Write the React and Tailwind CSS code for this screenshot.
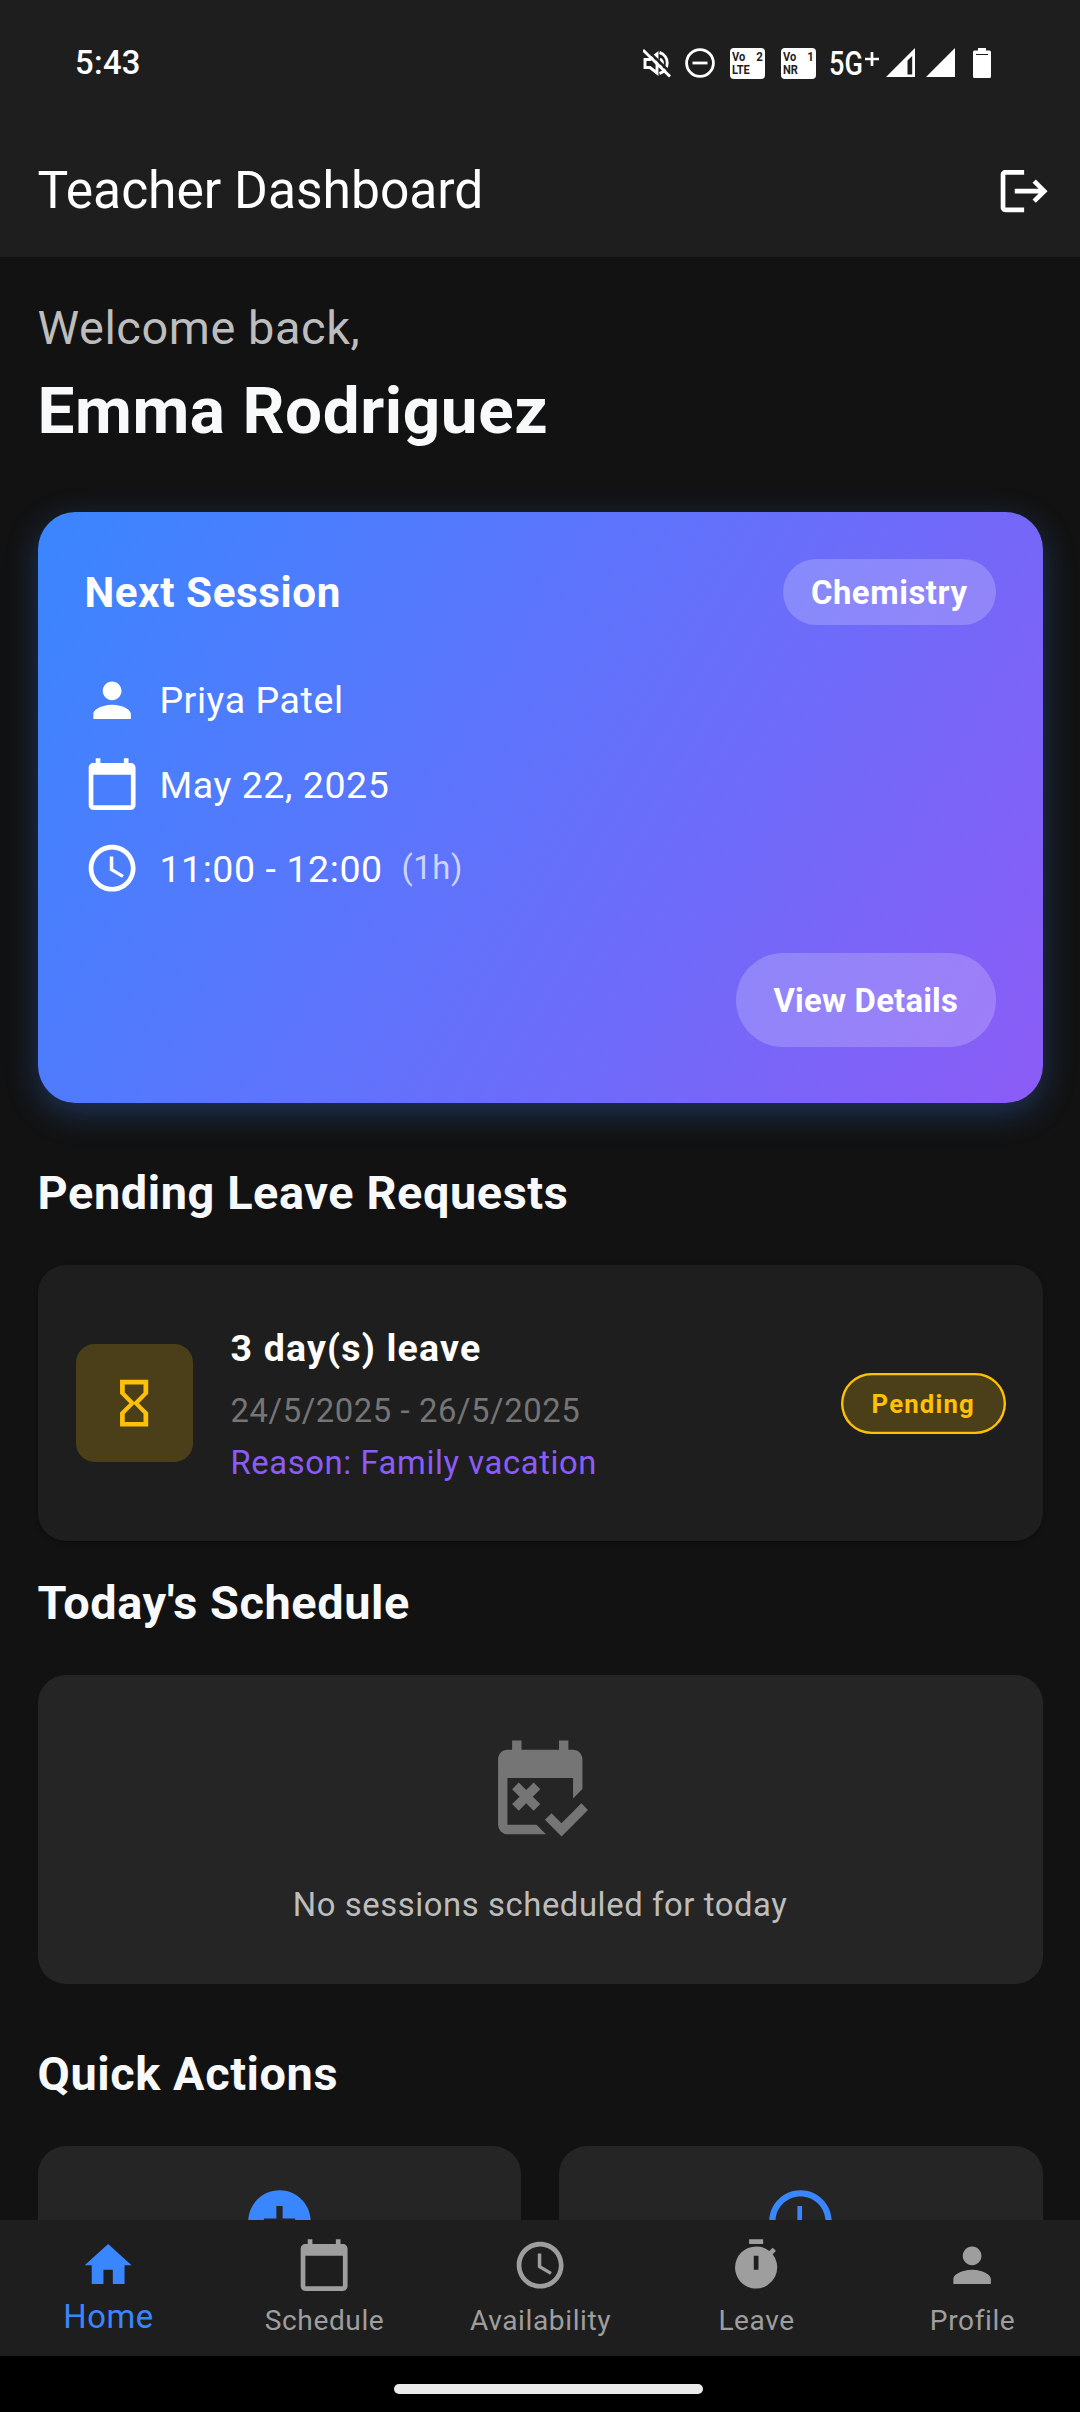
import {
  MdLogout, MdPerson, MdCalendarToday, MdSchedule, MdHourglassEmpty,
  MdFreeCancellation, MdAddCircle, MdHome, MdTimer,
} from "react-icons/md";

function MutedIcon() {
  return (
    <svg viewBox="0 0 28 30" className="h-[30px] w-[28px]" fill="none" stroke="white" strokeWidth="2.9">
      <path d="M2 11.500h5l7-5.500v19l-7-5.500H2z" />
      <path d="M17 11a4.500 4.500 0 0 1 0 8" />
      <path d="M16.500 4.500a11 11 0 0 1 0 21" />
      <path d="M1 -1l27 26" stroke="#1e1e1e" strokeWidth="2.500" />
      <path d="M0 2l27 26.500" strokeWidth="2.900" />
    </svg>
  );
}

function DndIcon() {
  return (
    <svg viewBox="0 0 30 30" className="h-[30px] w-[30px]" fill="none" stroke="white" strokeWidth="2.8">
      <circle cx="15" cy="15" r="13.4" />
      <path d="M7.500 15h15" />
    </svg>
  );
}

function VoBadge({ kind, slot }) {
  return (
    <div className="flex h-[31px] w-[35px] flex-col rounded-[4px] bg-white px-[2.3px] pt-[2px] text-[13.5px] leading-[13px] font-bold tracking-normal text-[#1e1e1e]">
      <div className="flex justify-between">
        <span className="origin-left scale-x-[0.82]">Vo</span>
        <span className="origin-right scale-x-[0.85]">{slot}</span>
      </div>
      <div className="origin-left scale-x-[0.82]">{kind}</div>
    </div>
  );
}

function StatusBar() {
  return (
    <div className="flex h-[126px] items-start pl-[75px] text-white">
      <span className="mt-[43px] text-[32.8px] leading-[40px] font-medium tracking-[0.3px]">5:43</span>
      <div className="ml-auto flex w-[437px] items-start pt-[48px]">
        <MutedIcon />
        <div className="ml-[14px]"><DndIcon /></div>
        <div className="ml-[15px]"><VoBadge kind="LTE" slot="2" /></div>
        <div className="ml-[16px]"><VoBadge kind="NR" slot="1" /></div>
        <div className="ml-[13px] flex w-[57px] items-start">
          <span className="-mt-[4px] w-[36px] origin-left scale-x-[0.82] text-[33px] leading-[40px] font-medium tracking-normal">5G</span>
          <svg viewBox="0 0 14 14" className="mt-[4px] h-[14px] w-[14px] shrink-0" stroke="white" strokeWidth="2.7">
            <path d="M7 0v14M0 7h14" />
          </svg>
        </div>
        <svg viewBox="0 0 29 29" className="h-[29px] w-[29px]">
          <path fillRule="evenodd" fill="white" d="M29 0v29H0zM26.200 8v18.500H21.500V12.500z" />
        </svg>
        <svg viewBox="0 0 29 29" className="ml-[11px] h-[29px] w-[29px]">
          <path fill="white" d="M29 0v29H0z" />
        </svg>
        <svg viewBox="0 0 18 30" className="ml-[18px] h-[30px] w-[18px]">
          <path fillRule="evenodd" fill="white" d="M5 0h8v2.500h3.500q1.500 0 1.500 1.500v24.500q0 1.500-1.500 1.500h-15q-1.500 0-1.500-1.500V4q0-1.500 1.500-1.500H5zM3 6h12v1H3z" />
        </svg>
      </div>
    </div>
  );
}

function SessionRow({ icon: Icon, children }) {
  return (
    <div className="flex h-[56.25px] items-center gap-[18.75px] text-[37.5px]">
      <Icon size={56.25} />
      <div className="flex items-center gap-[18.75px] pt-[1px]">{children}</div>
    </div>
  );
}

function NextSession() {
  return (
    <section className="mt-[57.3px] flex h-[590.6px] flex-col rounded-[37.5px] bg-[linear-gradient(120.45deg,#3a86ff,#8b5cf6)] p-[46.875px] text-white shadow-[0_9.4px_33px_rgba(58,134,255,0.3)]">
      <div className="flex h-[65.6px] items-center justify-between">
        <h2 className="pt-[1px] text-[42.19px] font-bold">Next Session</h2>
        <span className="flex h-[65.6px] items-center rounded-full bg-white/20 px-[28.1px] pt-[3px] text-[32.81px] font-bold">Chemistry</span>
      </div>
      <div className="mt-[46.875px] flex flex-col gap-[28.125px]">
        <SessionRow icon={MdPerson}>Priya Patel</SessionRow>
        <SessionRow icon={MdCalendarToday}>May 22, 2025</SessionRow>
        <SessionRow icon={MdSchedule}>
          11:00 - 12:00
          <span className="text-[32.81px] text-white/70">(1h)</span>
        </SessionRow>
      </div>
      <button className="mt-[56.25px] h-[93.75px] shrink-0 self-end rounded-full bg-white/20 px-[37.5px] pt-[3px] text-[32.81px] font-bold tracking-[0.234px]">
        View Details
      </button>
    </section>
  );
}

function SectionTitle({ className, children }) {
  return <h2 className={`text-[46.875px] leading-[66px] font-bold text-[#f8f9fa] ${className}`}>{children}</h2>;
}

function LeaveRequest() {
  return (
    <section className="mt-[39px] flex h-[276.2px] items-center rounded-[28.1px] bg-[#1e1e1e] pr-[37px] pl-[38px] shadow-[0_2px_4px_rgba(0,0,0,0.3)]">
      <div className="flex size-[117.2px] shrink-0 items-center justify-center rounded-[18.75px] bg-[#ffc107]/20 text-[#ffc107]">
        <MdHourglassEmpty size={56.25} />
      </div>
      <div className="ml-[37.8px] flex flex-1 flex-col pt-[3px]">
        <h3 className="text-[37.5px] leading-[56px] font-bold tracking-[1.17px] text-white">3 day(s) leave</h3>
        <p className="mt-[9px] text-[32.81px] leading-[52px] text-[#757575]">24/5/2025 - 26/5/2025</p>
        <p className="text-[32.81px] leading-[52px] text-[#8b5cf6]">Reason: Family vacation</p>
      </div>
      <span className="mt-[1px] flex h-[61px] items-center rounded-full bg-[#ffc107]/20 px-[30.500px] pt-[1px] text-[25.78px] font-bold tracking-[1.17px] text-[#ffc107] shadow-[inset_0_0_0_2.34px_#ffc107]">
        Pending
      </span>
    </section>
  );
}

function ActionCard({ icon: Icon }) {
  return (
    <button className="flex h-[260px] flex-col items-center rounded-[28.1px] bg-[#252525] pt-[38px] text-[#3a86ff]">
      <Icon size={75} />
    </button>
  );
}

function NavItem({ icon: Icon, label, active }) {
  return (
    <div className={`flex flex-col items-center pt-[16.7px] ${active ? "text-[#3a86ff]" : "text-[#9e9e9e]"}`}>
      <Icon size={56.25} />
      <span className={active ? "mt-[5.5px] pl-[1px] text-[32.81px] leading-[38px]" : "mt-[9px] pl-[1.2px] text-[28.125px] leading-[38px]"}>{label}</span>
    </div>
  );
}

export default function App() {
  return (
    <div className="flex h-[2412px] w-[1080px] flex-col overflow-hidden bg-[#121212] font-['Roboto',sans-serif] tracking-[0.586px]">
      <header className="h-[257px] shrink-0 bg-[#1e1e1e]">
        <StatusBar />
        <div className="flex h-[131px] items-center justify-between pr-[28px] pl-[37.5px] text-white">
          <h1 className="pb-[2px] text-[51.56px] leading-[60px] tracking-normal">Teacher Dashboard</h1>
          <MdLogout size={56.25} />
        </div>
      </header>

      <main className="h-[1963px] shrink-0 overflow-hidden px-[37.5px]">
        <p className="mt-[38px] text-[46.875px] leading-[66px] text-[#bdbdbd]">Welcome back,</p>
        <h1 className="mt-[6px] text-[65.625px] leading-[88px] font-bold text-[#f8f9fa]">Emma Rodriguez</h1>
        <NextSession />
        <SectionTitle className="mt-[57px]">Pending Leave Requests</SectionTitle>
        <LeaveRequest />
        <SectionTitle className="mt-[28.6px]">Today's Schedule</SectionTitle>
        <section className="mt-[39px] flex h-[309.4px] flex-col items-center rounded-[28.1px] bg-[#252525] pt-[56.25px]">
          <MdFreeCancellation size={112.5} className="text-[#757575]" />
          <p className="mt-[38.2px] text-[32.81px] leading-[47px] text-[#bdbdbd]">No sessions scheduled for today</p>
        </section>
        <SectionTitle className="mt-[56.8px]">Quick Actions</SectionTitle>
        <div className="mt-[39px] grid grid-cols-2 gap-[37.5px]">
          <ActionCard icon={MdAddCircle} />
          <ActionCard icon={MdSchedule} />
        </div>
      </main>

      <nav className="grid h-[136px] shrink-0 grid-cols-5 bg-[#1e1e1e]">
        <NavItem icon={MdHome} label="Home" active />
        <NavItem icon={MdCalendarToday} label="Schedule" />
        <NavItem icon={MdSchedule} label="Availability" />
        <NavItem icon={MdTimer} label="Leave" />
        <NavItem icon={MdPerson} label="Profile" />
      </nav>
      <div className="h-[56px] bg-black pt-[28px] pl-[394px]">
        <div className="h-[10px] w-[309px] rounded-full bg-[#ebebeb]" />
      </div>
    </div>
  );
}
